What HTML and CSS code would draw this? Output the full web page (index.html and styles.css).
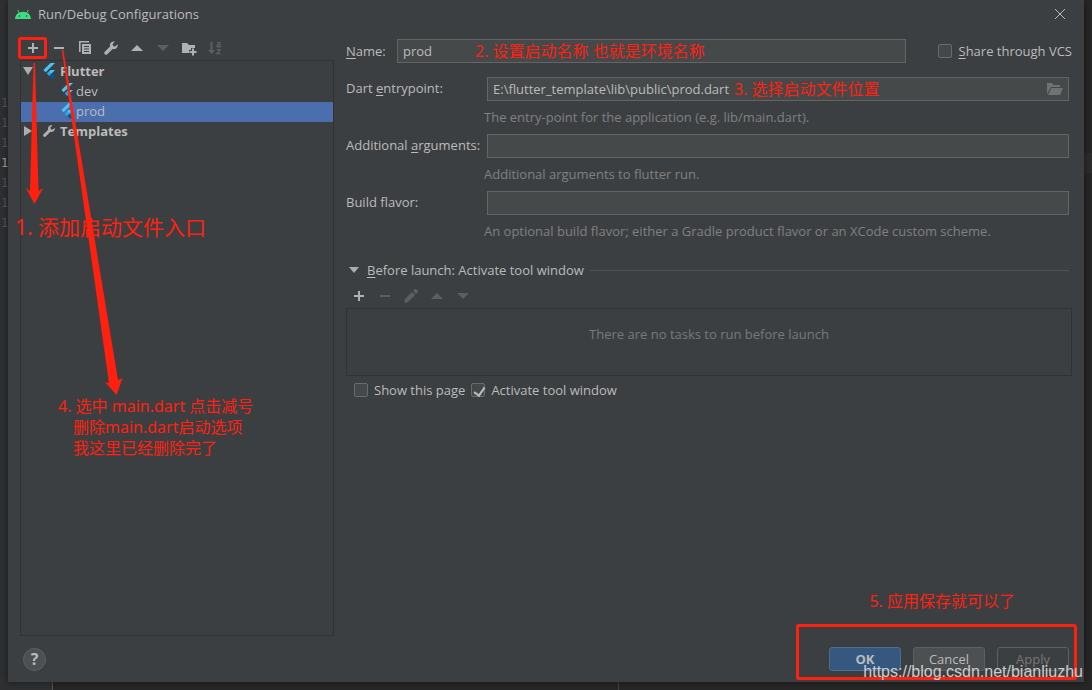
FILE: index.html
```html
<!DOCTYPE html>
<html lang="en">
<head>
<meta charset="utf-8">
<title>Run/Debug Configurations</title>
<link rel="stylesheet" href="styles.css">
</head>
<body>
<svg class="defs" aria-hidden="true">
  <symbol id="i-plus" viewBox="0 0 16 16"><path fill="currentColor" d="M7 3h2v4h4v2H9v4H7V9H3V7h4z"/></symbol>
  <symbol id="i-minus" viewBox="0 0 16 16"><path fill="currentColor" d="M3 7h10v2H3z"/></symbol>
  <symbol id="i-up" viewBox="0 0 16 16"><path fill="currentColor" d="M2 11h12L8 5z"/></symbol>
  <symbol id="i-down" viewBox="0 0 16 16"><path fill="currentColor" d="M2 5h12l-6 6z"/></symbol>
  <symbol id="i-copy" viewBox="0 0 16 16"><path fill="currentColor" d="M2 1h10v1.600H3.600V12H2z"/><path fill="currentColor" fill-rule="evenodd" d="M5 4h9v10H5zM7 6v1h5V6zm0 2.500v1h5v-1zM7 11v1h5v-1z"/></symbol>
  <symbol id="i-wrench" viewBox="0 0 16 16"><path fill="currentColor" d="M14.600 4.200l-2.500 2.300-2-.4-.5-2L12 1.600C10.200 1 8.200 1.700 7.300 3.400c-.5 1-.6 2-.2 3.100L1.800 11.700c-.7.7-.7 1.800 0 2.500s1.800.7 2.500 0l5.300-5.300c1.400.5 3 .1 4-1 .9-1 1.300-2.400 1-3.700z"/></symbol>
  <symbol id="i-newfolder" viewBox="0 0 16 16"><path fill="currentColor" d="M1 3h5l2 2h6v3h-4v2H8v3H1z"/><path fill="currentColor" d="M11 8.500h2V11h2.500v2H13v2.500h-2V13H8.500v-2H11z"/></symbol>
  <symbol id="i-sort" viewBox="0 0 16 16"><path fill="currentColor" d="M3.500 2h2v8H8l-3.500 4L1 10h2.500z"/><path fill="none" stroke="currentColor" stroke-width="1.300" d="M10 2.700h3v4.100h-2.700V4.900H13M9.700 9.700h3.500l-3.200 3.800h3.500"/></symbol>
  <symbol id="i-pencil" viewBox="0 0 16 16"><path fill="currentColor" d="M1.500 14.500v-3L9 4l3 3-7.500 7.500zM10 3l1.800-1.800c.4-.4 1-.4 1.400 0l1.600 1.600c.4.4.4 1 0 1.400L13 6z"/></symbol>
  <symbol id="i-flutter" viewBox="0 0 14 16"><path fill="#47c5fb" d="M8.500 0H13L3.700 9.300 1.400 7zM8.500 7H13L9.500 10.500 7.300 12.800 5 10.500z"/><path fill="#00569e" d="M7.300 12.800l2.200-2.300L13 14v1.500H9.500z"/><path fill="#22a9e8" d="M5 10.500l2.300-2.300 2.200 2.300-2.200 2.300z"/></symbol>
</svg>

<div class="editor" aria-hidden="true">
  <div class="gutter"><span>1</span><span>1</span><span>1</span><span class="current">1</span><span>1</span><span>1</span><span>1</span></div>
  <div class="code"><div class="caret-line"></div><div class="splitter"></div></div>
</div>

<main class="dialog">
  <header class="titlebar">
    <svg class="android" viewBox="0 0 16 10"><path fill="#3ddc84" d="M0 10C.2 7 1.700 5 3.700 3.800L2.300 1.200l.7-.4 1.500 2.600C6.700 2.600 9.300 2.600 11.500 3.400L13 .8l.7.4-1.400 2.600C14.300 5 15.800 7 16 10z"/><circle cx="4.500" cy="7" r=".8" fill="#3c3f41"/><circle cx="11.500" cy="7" r=".8" fill="#3c3f41"/></svg>
    <h1>Run/Debug Configurations</h1>
    <button class="close" aria-label="Close"><svg viewBox="0 0 12 12"><path d="M1 1l10 10M11 1L1 11" stroke="#bbb" stroke-width="1"/></svg></button>
  </header>

  <div class="content">
    <section class="sidebar">
      <div class="toolbar">
        <button aria-label="Add"><svg><use href="#i-plus"/></svg></button>
        <button aria-label="Remove"><svg><use href="#i-minus"/></svg></button>
        <button aria-label="Copy"><svg><use href="#i-copy"/></svg></button>
        <button aria-label="Edit templates"><svg><use href="#i-wrench"/></svg></button>
        <button aria-label="Move up"><svg><use href="#i-up"/></svg></button>
        <button aria-label="Move down" disabled><svg><use href="#i-down"/></svg></button>
        <button aria-label="New folder"><svg><use href="#i-newfolder"/></svg></button>
        <button aria-label="Sort" disabled><svg><use href="#i-sort"/></svg></button>
      </div>
      <ul class="tree">
        <li class="group"><svg class="toggle" viewBox="0 0 12 12"><path fill="#adadad" d="M1 2h10L6 10z"/></svg><svg class="node-icon"><use href="#i-flutter"/></svg>Flutter</li>
        <li class="leaf"><svg class="node-icon"><use href="#i-flutter"/></svg>dev</li>
        <li class="leaf selected"><svg class="node-icon"><use href="#i-flutter"/></svg>prod</li>
        <li class="group"><svg class="toggle" viewBox="0 0 12 12"><path fill="#adadad" d="M2 1l8 5-8 5z"/></svg><svg class="node-icon"><use href="#i-wrench"/></svg>Templates</li>
      </ul>
    </section>

    <section class="settings">
      <div class="name-row">
        <label class="name-label" for="name"><u>N</u>ame:</label>
        <input class="field" id="name" type="text" value="prod">
        <label class="check share"><input type="checkbox"><span><u>S</u>hare through VCS</span></label>
      </div>

      <div class="form">
        <label for="entry">Dart <u>e</u>ntrypoint:</label>
        <div class="field browse">
          <input id="entry" type="text" value="E:\flutter_template\lib\public\prod.dart">
          <button aria-label="Browse"><svg viewBox="0 0 16 12"><path fill="#6e7375" d="M0 11V0h5l1.500 2H13v2H4z"/><path fill="#6e7375" d="M4.500 5H16l-3 7H1z"/></svg></button>
        </div>
        <p>The entry-point for the application (e.g. lib/main.dart).</p>
        <label for="args">Additional <u>a</u>rguments:</label>
        <input class="field" id="args" type="text">
        <p>Additional arguments to flutter run.</p>
        <label for="flavor">Build flavor:</label>
        <input class="field" id="flavor" type="text">
        <p>An optional build flavor; either a Gradle product flavor or an XCode custom scheme.</p>
      </div>

      <h2 class="section-title"><svg viewBox="0 0 10 6"><path fill="#adadad" d="M0 0h10L5 6z"/></svg><span><u>B</u>efore launch: Activate tool window</span></h2>
      <div class="toolbar tasks-toolbar">
        <button aria-label="Add task"><svg><use href="#i-plus"/></svg></button>
        <button aria-label="Remove task" disabled><svg><use href="#i-minus"/></svg></button>
        <button aria-label="Edit task" disabled><svg><use href="#i-pencil"/></svg></button>
        <button aria-label="Move task up" disabled><svg><use href="#i-up"/></svg></button>
        <button aria-label="Move task down" disabled><svg><use href="#i-down"/></svg></button>
      </div>
      <div class="tasks">There are no tasks to run before launch</div>
      <div class="options">
        <label class="check"><input type="checkbox"><span>Show this page</span></label>
        <label class="check"><input type="checkbox" checked><span>Activate tool window</span></label>
      </div>
    </section>
  </div>

  <footer class="footer">
    <button class="help" aria-label="Help">?</button>
    <button class="btn primary">OK</button>
    <button class="btn">Cancel</button>
    <button class="btn" disabled>Apply</button>
  </footer>
</main>

<div class="notes">
  <svg class="arrows" width="140" height="400" viewBox="0 0 140 400">
    <path fill="#ff2010" d="M33.500 63h1.500L38.500 191l4.700-3-8.700 16-8.700-16 4.200 3z"/>
    <path fill="#ff2010" d="M61.800 50h1.600L118 380l4.500-2-6 17-11.500-13 4 1z"/>
  </svg>
  <div class="mark mark-add"></div>
  <div class="note note-1">1. 添加启动文件入口</div>
  <div class="note note-2">2. 设置启动名称 也就是环境名称</div>
  <div class="note note-3">3. 选择启动文件位置</div>
  <div class="note note-4">4. 选中 main.dart 点击减号<div class="indent">删除main.dart启动选项<br>我这里已经删除完了</div></div>
  <div class="note note-5">5. 应用保存就可以了</div>
  <div class="mark mark-buttons"></div>
  <div class="watermark">https://blog.csdn.net/bianliuzhu</div>
</div>
</body>
</html>
```

FILE: styles.css
```css
* { box-sizing: border-box; }

body {
  position: relative;
  display: flex;
  min-height: 100vh;
  margin: 0;
  padding: 0 8px 8px;
  background: #2b2b2b;
  color: #bbb;
  font: 13px/20px "Open Sans", "Noto Sans CJK SC", sans-serif;
}

button, input { font: inherit; color: inherit; }
button { padding: 0; border: 0; background: none; }
u { text-underline-offset: 2px; }
.defs { position: absolute; width: 0; height: 0; }

/* Editor behind the dialog */
.editor { position: absolute; inset: 0; display: flex; overflow: hidden; }
.gutter {
  display: flex;
  flex-direction: column;
  width: 53px;
  padding: 93px 0 0 1px;
  border-right: 1px solid #555;
  background: #2e3032;
  color: #55585a;
  font-family: "DejaVu Sans Mono", monospace;
  font-size: 12px;
}
.gutter .current { color: #a4a3a3; }
.code { display: flex; flex: 1; flex-direction: column; padding-top: 153px; background: #272727; }
.caret-line { height: 20px; background: #2d2d2d; }
.splitter { flex: 1; width: 566px; border-right: 1px solid #444; }

/* Dialog */
.dialog {
  position: relative;
  display: flex;
  flex: 1;
  flex-direction: column;
  min-width: 0;
  background: #3c3f41;
  box-shadow: 0 0 8px rgba(0, 0, 0, .5);
}
.titlebar { display: flex; align-items: center; gap: 7px; height: 28px; padding: 0 18px 0 7px; }
.titlebar h1 { flex: 1; margin: 0; font-size: 13px; font-weight: 400; }
.android { width: 16px; height: 10px; }
.close { width: 12px; height: 12px; }
.close svg { display: block; }

.content { display: flex; flex: 1; gap: 12px; padding: 0 12px; }
.sidebar { display: flex; flex: none; flex-direction: column; width: 314px; }
.settings { flex: 1; min-width: 0; padding-top: 11px; }

.toolbar { display: flex; align-items: center; gap: 10px; height: 32px; padding: 7px 5px 0; }
.toolbar button { width: 16px; height: 16px; color: #afb1b3; }
.toolbar button:disabled { color: #5c5e60; }
.toolbar svg { display: block; width: 16px; height: 16px; }

.tree { flex: 1; margin: 0; padding: 1px 0; border: 1px solid #323232; list-style: none; }
.tree li { display: flex; align-items: center; height: 20px; padding-bottom: 2px; line-height: 18px; }
.tree .group { gap: 4px; padding-left: 1px; font-weight: 700; }
.tree .leaf { gap: 2px; padding-left: 39px; }
.selected { background: #4b6eaf; }
.toggle { width: 12px; height: 12px; margin-right: 4px; }
.node-icon { width: 14px; height: 16px; color: #afb1b3; }

.field {
  width: 100%;
  height: 24px;
  padding: 0 5px;
  border: 1px solid #646464;
  border-radius: 0;
  outline: 0;
  background: #45494a;
}
.name-row { display: flex; align-items: center; }
.name-label { flex: none; width: 51px; }
.name-row .field { flex: 1; min-width: 0; }
.share { flex: none; min-width: 130px; margin-left: 32px; }

.check { display: flex; align-items: center; gap: 6px; white-space: nowrap; }
.check input {
  appearance: none;
  flex: none;
  width: 14px;
  height: 14px;
  margin: 0;
  border: 1px solid #6b6b6b;
  border-radius: 2px;
  background: #43494a;
}
.check input:checked::after {
  content: "";
  display: block;
  width: 5px;
  height: 9px;
  margin: 1px 0 0 4px;
  border: solid #bbb;
  border-width: 0 2px 2px 0;
  transform: rotate(35deg);
}

.form { display: grid; grid-template-columns: 138px 1fr; align-items: center; margin-top: 14px; }
.form > label { padding-bottom: 2px; white-space: nowrap; }
.form .field { width: auto; margin: 0 3px; }
.form p { grid-column: 2; margin: 0; padding: 6px 0 7px; color: #808080; }
.browse { display: flex; align-items: center; }
.browse input { flex: 1; min-width: 0; padding: 0; border: 0; outline: 0; background: none; }
.browse button { width: 16px; height: 12px; }
.browse svg { display: block; }

.section-title {
  display: flex;
  align-items: center;
  margin: 12px 0 0;
  padding-left: 3px;
  font-size: 13px;
  font-weight: 400;
}
.section-title svg { width: 10px; height: 6px; margin-right: 8px; }
.section-title::after { content: ""; flex: 1; height: 1px; margin: 0 3px 0 6px; background: #515151; }
.tasks-toolbar { height: 28px; padding-top: 4px; }
.tasks {
  height: 68px;
  padding-top: 15px;
  border: 1px solid #323232;
  color: #787878;
  text-align: center;
}
.options { display: flex; gap: 6px; padding: 4px 8px; }

.footer { display: flex; align-items: center; gap: 12px; height: 46px; padding: 0 15px; }
.help {
  width: 23px;
  height: 23px;
  margin-right: auto;
  border: 1px solid #5e6162;
  border-radius: 50%;
  background: #4c5052;
  font-size: 16px;
  font-weight: 700;
  line-height: 20px;
}
.btn { width: 72px; height: 24px; border: 1px solid #5e6060; border-radius: 3px; background: #4c5052; }
.btn.primary { border-color: #4c708c; background: #365880; font-weight: 700; }
.btn:disabled { background: none; color: #777; }

/* Tutorial annotations drawn over the dialog */
.notes { position: absolute; inset: 0; color: #ff2010; pointer-events: none; }
.arrows { position: absolute; top: 0; left: 0; }
.note {
  position: absolute;
  font-family: "Noto Sans", "Noto Sans CJK SC", sans-serif;
  font-size: 16px;
  line-height: 21px;
  white-space: nowrap;
}
.note-1 { top: 217px; left: 15px; font-size: 21px; }
.note-2 { top: 41px; left: 475px; }
.note-3 { top: 79px; left: 734px; }
.note-4 { top: 396px; left: 58px; }
.note-5 { right: 77px; bottom: 78px; }
.indent { padding-left: 15px; }
.mark { position: absolute; border: 3px solid #ff2010; border-radius: 3px; }
.mark-add { top: 37px; left: 18px; width: 29px; height: 22px; }
.mark-buttons { right: 15px; bottom: 10px; width: 281px; height: 56px; }
.watermark {
  position: absolute;
  right: 9px;
  bottom: 8px;
  color: rgba(230, 230, 230, .85);
  font: 16px/20px "Liberation Sans", sans-serif;
}
```
